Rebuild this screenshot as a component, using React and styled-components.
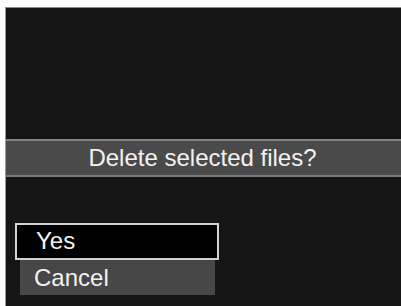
import React from "react";
import styled, { createGlobalStyle } from "styled-components";

const Global = createGlobalStyle`
  html, body { margin: 0; padding: 0; background: #ffffff; }
  body { width: 401px; height: 306px; overflow: hidden; }
`;

const Screen = styled.div`
  margin: 7px 0 0 5px;
  height: 299px;
  box-sizing: border-box;
  background: #151515;
  border-top: 1px solid #8c8c8c;
  border-left: 1px solid #9a9a9a;
  display: flex;
  flex-direction: column;
  padding-top: 131px;
  font-family: "Liberation Sans", Arial, sans-serif;
  color: #f2f2f2;
`;

const Banner = styled.div`
  height: 38px;
  box-sizing: border-box;
  background: #4a4a4a;
  border-top: 2px solid #828282;
  border-bottom: 2px solid #7a7a7a;
  font-size: 24px;
  line-height: 34px;
  text-align: center;
  padding-right: 2px;
`;

const Menu = styled.div`
  margin-top: 46px;
  display: flex;
  flex-direction: column;
`;

const Option = styled.div`
  box-sizing: border-box;
  margin-left: ${(p) => (p.$selected ? "9px" : "14px")};
  width: ${(p) => (p.$selected ? "204px" : "195px")};
  height: ${(p) => (p.$selected ? "37px" : "35px")};
  background: ${(p) => (p.$selected ? "#000000" : "#474747")};
  border: ${(p) => (p.$selected ? "2px solid #d2d2d2" : "none")};
  padding-left: ${(p) => (p.$selected ? "19px" : "14px")};
  font-size: 24px;
  line-height: ${(p) => (p.$selected ? "31px" : "35px")};
`;

export default function App() {
  return (
    <>
      <Global />
      <Screen>
        <Banner>Delete selected files?</Banner>
        <Menu>
          <Option $selected>Yes</Option>
          <Option>Cancel</Option>
        </Menu>
      </Screen>
    </>
  );
}
